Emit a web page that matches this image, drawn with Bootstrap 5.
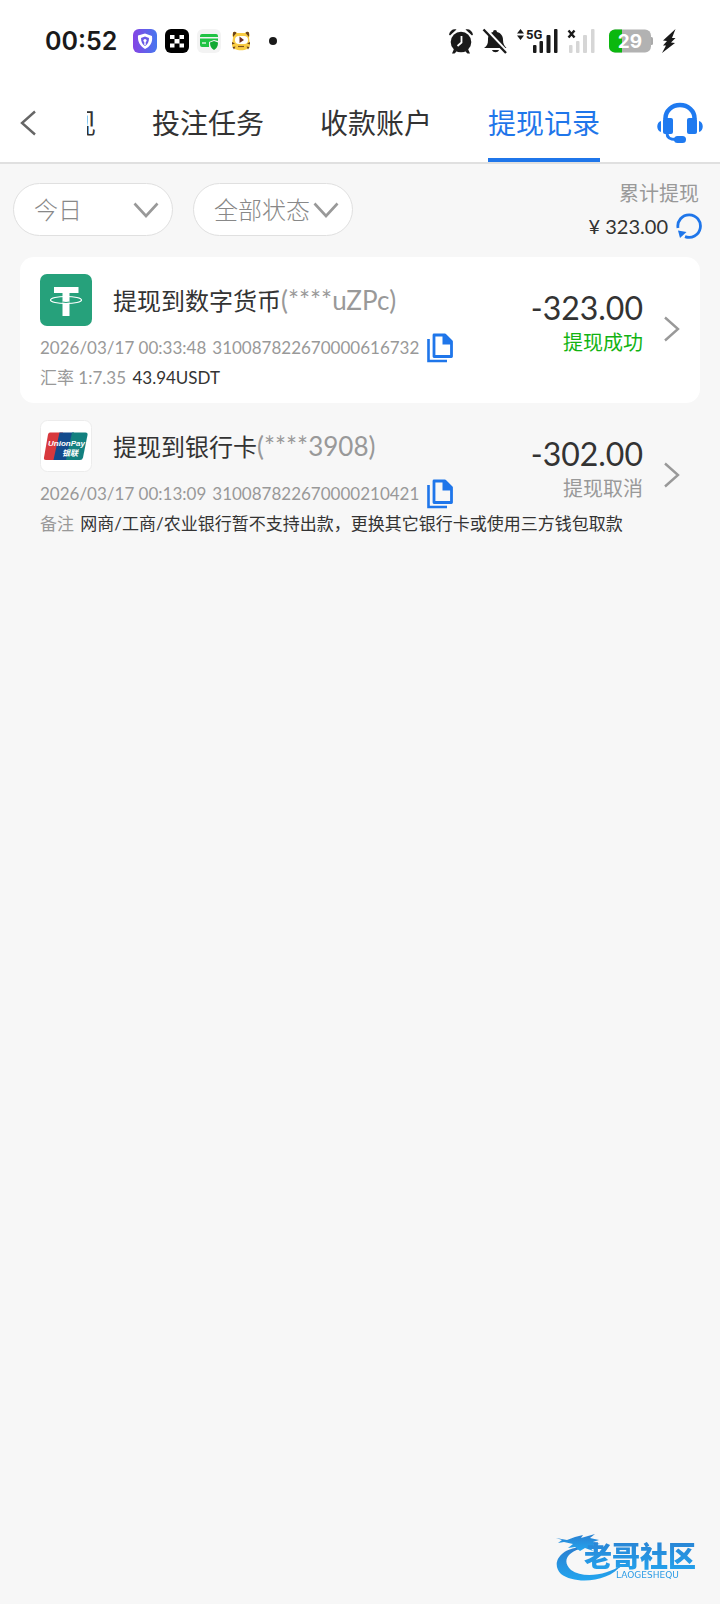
<!DOCTYPE html>
<html lang="zh-CN">
<head>
<meta charset="utf-8">
<meta name="viewport" content="width=device-width, initial-scale=1">
<title>提现记录</title>
<link href="https://cdn.jsdelivr.net/npm/bootstrap@5.3.0/dist/css/bootstrap.min.css" rel="stylesheet">
<style>
  :root { --ink: #333; --soft: #999; --brand: #1f76ea; --ok: #12b312; }
  body { background: #f7f7f7; color: var(--ink); font-family: Lato, "Noto Sans CJK SC", sans-serif; min-height: 100vh; }
  svg { display: block; flex: none; }
  .status-bar { height: 80px; padding: 2px 44px 0 45px; color: #1a1a1a; }
  .clock { font: 600 25px/30px Inter, sans-serif; width: 88px; }
  .top-nav { height: 84px; border-bottom: 2px solid #e0e0e0; padding: 0 16px 0 20px; }
  .top-nav .plain-btn { padding-top: 4px; }
  .tab-strip { height: 82px; margin: 0 28px 0 51px; min-width: 0; overflow: hidden; }
  .tab-item { flex: none; margin: 0 28px; padding-top: 8px; font-size: 28px; line-height: 70px; color: var(--ink); text-decoration: none; border-bottom: 4px solid transparent; white-space: nowrap; }
  .tab-item.active { color: var(--brand); border-color: var(--brand); }
  .plain-btn { background: none; border: 0; padding: 0; }
  .filters { padding: 19px 18px 0 13px; height: 93px; }
  .pill-select { width: 160px; height: 53px; margin-right: 20px; padding: 0 0 0 20px; border: 1px solid #e0e0e0; border-radius: 27px; font-size: 24px; font-weight: 300; line-height: 32px; color: #888;
    background-position: right 13px center; background-size: 26px 16px;
    background-image: url("data:image/svg+xml,%3Csvg xmlns='http://www.w3.org/2000/svg' viewBox='0 0 26 16'%3E%3Cpath d='M1.500 1.500L13 14L24.500 1.500' fill='none' stroke='%23999' stroke-width='2.600'/%3E%3C/svg%3E"); }
  .sum-label { font-size: 20px; line-height: 20px; color: var(--soft); padding-right: 3px; margin-bottom: 10px; }
  .sum-value { font-size: 20px; line-height: 26px; }
  .record { margin: 0 20px; padding: 17px 20px 10px; border-radius: 14px; }
  .record-title { height: 52px; font-size: 24px; white-space: nowrap; }
  .record-name { margin-left: 21px; }
  .account { font-size: 26px; }
  .soft { color: var(--soft); }
  .record-meta { height: 30px; margin-top: 7px; font-size: 17px; line-height: 30px; color: var(--soft); white-space: nowrap; }
  .serial { margin: 0 8px 0 6px; }
  .record-note { font-size: 17px; line-height: 30px; }
  .note-label { margin-right: 2px; }
  .amount { font-size: 32px; line-height: 36px; padding-top: 16px; }
  .state { font-size: 20px; line-height: 32px; }
  .state-ok { color: var(--ok); }
  .record-open { margin-left: 21px; padding-bottom: 10px; }
  .brand-mark { position: fixed; right: 16px; bottom: 20px; width: 150px; height: 54px; }
</style>
</head>
<body>
<header class="bg-white">
  <div class="status-bar d-flex align-items-center">
    <div class="clock">00:52</div>
    <div class="d-flex align-items-center gap-2 flex-grow-1">
      <svg width="24" height="24" viewBox="0 0 24 24"><defs><linearGradient id="vp"><stop stop-color="#8544e4"/><stop offset="1" stop-color="#4777ef"/></linearGradient></defs><rect width="24" height="24" rx="6" fill="url(#vp)"/><path d="M5 6.500L12 4.500L19 7C20 13 17 18 12 20C7 17 4.500 13 5 6.500Z" fill="#fff"/><path d="M8 9l4-1.500L16 9c0 4-1.500 6.500-4 8-2.500-1.500-4-4-4-8z" fill="#6a59e6"/><circle cx="12" cy="11.500" r="1.600" fill="#fff"/><path d="M11.300 12h1.400v4h-1.400z" fill="#fff"/></svg>
      <svg width="24" height="24" viewBox="0 0 24 24"><rect width="24" height="24" rx="6"/><path d="M5 6h4.500v4H5zM14.500 6H19v4h-4.500zM9.500 10h5v4.500h-5zM5 14.500h4.500v4H5zM14.500 14.500H19v4h-4.500z" fill="#fff"/></svg>
      <svg width="24" height="24" viewBox="0 0 24 24"><rect width="24" height="24" rx="6" fill="#f3f3f3"/><path d="M3 7a2 2 0 0 1 2-2h14a2 2 0 0 1 2 2v1H3zM3 9.500h18V12l-4-1-5 2v5H5a2 2 0 0 1-2-2z" fill="#20c344"/><path d="M5 14h4" stroke="#fff" stroke-width="1.200"/><path d="M13 13.500l4-1.500 4 1.500c0 4-1.500 6-4 7.500-2.500-1.500-4-3.500-4-7.500z" fill="#12a833"/></svg>
      <svg width="24" height="24" viewBox="0 0 24 24"><path d="M4 3.500Q6 2 8 4h8q2-2 4-.500Q21.500 6 20 8.500L21 16c0 7-18 7-18 0l1-7.500Q2.500 6 4 3.500z" fill="#f9cd45"/><path d="M4 3.500Q6 2 7.500 4L4 8zM20 3.500Q18 2 16.500 4L20 8zM3 13l3 1.500-3 1zM21 13l-3 1.500 3 1zM3.500 18l3-.500-1.500 3zM20.500 18l-3-.500 1.500 3z" fill="#6a421d"/><rect x="6" y="7" width="13" height="8" rx="4" fill="#fff"/><path d="M10.500 7.500l4.500 3.500-4.500 3z" fill="#6d2f22"/><path d="M9 17.500h6" stroke="#80521d" stroke-width="1.200"/></svg>
      <svg width="24" height="24" viewBox="0 0 24 24"><circle cx="12" cy="12" r="4" fill="#1a1a1a"/></svg>
    </div>
    <div class="d-flex align-items-center">
      <svg class="me-2" width="26" height="26" viewBox="0 0 26 26" fill="#1a1a1a"><circle cx="13" cy="14" r="10.300"/><path d="M1 6.500C2 2.500 5 .500 8.500 1.500L2 7.500zM25 6.500C24 2.500 21 .500 17.500 1.500L24 7.500zM6 21l-2 4.500h2.500L9 23zM20 21l2 4.500h-2.500L17 23z"/><path d="M13.500 8v6.500L9.500 18" fill="none" stroke="#fff" stroke-width="1.800"/></svg>
      <svg width="26" height="26" viewBox="0 0 26 26"><path d="M11 4a2 2 0 0 1 4 0c4 1 6 4 6 8 0 4 1.500 6 3.500 8H2c3-2 4-4 4-8 0-4 1-7 5-8zM10 22h7c-1 3-6 3-7 0z" fill="#1a1a1a"/><path d="M3.500 1L26 25" stroke="#fff" stroke-width="3"/><path d="M1.500 1.500L24 25" stroke="#1a1a1a" stroke-width="2.400"/></svg>
      <svg class="ms-2" width="43" height="26" viewBox="0 0 43 26" fill="#1a1a1a"><path d="M1 5.500l3.500-4.500L8 5.500zM1 7.500h7l-3.500 4.500z"/><text x="10" y="11" font-family="Roboto" font-weight="700" font-size="13">5G</text><rect x="17" y="17" width="3.500" height="8" rx="1"/><rect x="23.500" y="13" width="3.500" height="12" rx="1"/><rect x="30.500" y="7" width="4" height="18" rx="1"/><rect x="38" y="1" width="3.500" height="24" rx="1"/></svg>
      <svg class="ms-2" width="29" height="26" viewBox="0 0 29 26"><path d="M1.500 2.500l6 7m0-7l-6 7" stroke="#1a1a1a" stroke-width="2.400"/><g fill="#d6d6d6"><rect x="2" y="17" width="3.500" height="8" rx="1"/><rect x="9" y="13" width="3.500" height="12" rx="1"/><rect x="16" y="7" width="4" height="18" rx="1"/><rect x="24" y="1" width="3.500" height="24" rx="1"/></g></svg>
      <svg class="ms-2 me-2 ps-1 box-content" width="50" height="24" viewBox="0 0 46 24"><path d="M42 8h1.500q1.500 0 1.500 1.500v5q0 1.500-1.500 1.500H42z" fill="#aaa"/><rect x="1" y=".500" width="42" height="23" rx="6" fill="#b2b2b2"/><path d="M14 .500H7a6 6 0 0 0-6 6v11a6 6 0 0 0 6 6h7z" fill="#0bb80f"/><text x="22" y="19" text-anchor="middle" font-family="Inter" font-weight="700" font-size="19" fill="#fff">29</text></svg>
      <svg width="14" height="24" viewBox="0 0 14 24"><path d="M13.500 0L1 11.500l4 .500-4 4.500h3L0 24l13-10-4-.500 4.500-4.500H10z" fill="#1a1a1a"/></svg>
    </div>
  </div>
  <nav class="top-nav d-flex align-items-center">
    <button class="plain-btn" type="button" aria-label="返回"><svg width="16" height="26" viewBox="0 0 16 26"><path d="M15 1.500L2 13l13 11.500" fill="none" stroke="#666" stroke-width="2.400"/></svg></button>
    <div class="tab-strip d-flex justify-content-end flex-grow-1">
      <a class="tab-item" href="#">提现</a>
      <a class="tab-item" href="#">投注任务</a>
      <a class="tab-item" href="#">收款账户</a>
      <a class="tab-item active" href="#" aria-current="page">提现记录</a>
    </div>
    <button class="plain-btn" type="button" aria-label="客服"><svg width="48" height="42" viewBox="0 0 48 42" fill="#1f7af0"><path d="M9.500 17v-1a14.500 13 0 0 1 29 0v1" fill="none" stroke="#1f7af0" stroke-width="4.500"/><rect x="7" y="16" width="10" height="16" rx="2"/><rect x="31" y="16" width="10" height="16" rx="2"/><path d="M5 19v11c-5-1-5-10 0-11zM43 19v11c5-1 5-10 0-11z"/><path d="M11 31c0 5 3 6.500 9 6.500" fill="none" stroke="#1f7af0" stroke-width="3"/><rect x="18" y="34" width="12" height="7" rx="3.500"/></svg></button>
  </nav>
</header>
<main>
  <section class="filters d-flex align-items-start">
    <select class="form-select pill-select" aria-label="日期"><option>今日</option></select>
    <select class="form-select pill-select" aria-label="状态"><option>全部状态</option></select>
    <div class="ms-auto text-end">
      <div class="sum-label">累计提现</div>
      <div class="sum-value d-flex align-items-center justify-content-end gap-2"><span>¥ 323.00</span>
        <button class="plain-btn" type="button" aria-label="刷新"><svg width="26" height="26" viewBox="0 0 26 26"><path d="M2 15A11.300 11.300 0 1 1 9 23.600" fill="none" stroke="#1f76ea" stroke-width="2.800"/><path d="M2 17.500l8.500 1.500L4 25z" fill="#1f76ea"/></svg></button>
      </div>
    </div>
  </section>

  <article class="record bg-white d-flex align-items-center">
    <div class="flex-grow-1">
      <div class="d-flex justify-content-between">
        <div>
          <div class="record-title d-flex align-items-center">
            <svg width="52" height="52" viewBox="0 0 52 52"><rect width="52" height="52" rx="7" fill="#26a17b"/><path d="M14 13h24.500v6H29.500v23h-7V19H14z" fill="#fff"/><ellipse cx="26" cy="26" rx="15.500" ry="3.500" fill="none" stroke="#fff" stroke-width="1.200"/><path d="M22.500 28q3.500 1 7 0" stroke="#26a17b" fill="none"/></svg>
            <span class="record-name">提现到数字货币<span class="soft account">(****uZPc)</span></span>
          </div>
          <div class="record-meta d-flex align-items-center"><span>2026/03/17 00:33:48</span><span class="serial">310087822670000616732</span>
            <button class="plain-btn" type="button" aria-label="复制"><svg width="26" height="30" viewBox="0 0 26 30"><path d="M1.500 6v22H20" fill="none" stroke="#1f76ea" stroke-width="2.600"/><path d="M7 2h11l6.500 6.500V23.500H7z" fill="none" stroke="#1f76ea" stroke-width="2.800" stroke-linejoin="round"/><path d="M15.500 1.500H18L25 9v2.500h-9.500z" fill="#1f76ea"/></svg></button>
          </div>
        </div>
        <div class="text-end"><div class="amount">-323.00</div><div class="state state-ok">提现成功</div></div>
      </div>
      <div class="record-note"><span class="soft note-label">汇率 1:7.35</span> 43.94USDT</div>
    </div>
    <a class="record-open" href="#" aria-label="详情"><svg width="16" height="26" viewBox="0 0 16 26"><path d="M1 1.500L14 13L1 24.500" fill="none" stroke="#999" stroke-width="2.400"/></svg></a>
  </article>

  <article class="record d-flex align-items-center">
    <div class="flex-grow-1">
      <div class="d-flex justify-content-between">
        <div>
          <div class="record-title d-flex align-items-center">
            <svg width="52" height="52" viewBox="0 0 52 52"><rect x=".500" y=".500" width="51" height="51" rx="7" fill="#fff" stroke="#ececec"/><path d="M10 12.500h13L17 40H6q-2.500 0-2-2.500L8 14.500q.500-2 2-2z" fill="#d8383d"/><path d="M19.500 12.500H34L28 40H13.500z" fill="#124a8c"/><path d="M32 12.500h13.500q2.500 0 2 2.500L43 37.500q-.500 2.500-3 2.500H26z" fill="#12807f"/><text x="8" y="26" font-family="Liberation Sans" font-size="8" font-weight="700" font-style="italic" fill="#fff">UnionPay</text><text x="22" y="35.500" font-family="Noto Sans CJK SC" font-size="8" font-weight="700" font-style="italic" fill="#fff">银联</text></svg>
            <span class="record-name">提现到银行卡<span class="soft account">(****3908)</span></span>
          </div>
          <div class="record-meta d-flex align-items-center"><span>2026/03/17 00:13:09</span><span class="serial">310087822670000210421</span>
            <button class="plain-btn" type="button" aria-label="复制"><svg width="26" height="30" viewBox="0 0 26 30"><path d="M1.500 6v22H20" fill="none" stroke="#1f76ea" stroke-width="2.600"/><path d="M7 2h11l6.500 6.500V23.500H7z" fill="none" stroke="#1f76ea" stroke-width="2.800" stroke-linejoin="round"/><path d="M15.500 1.500H18L25 9v2.500h-9.500z" fill="#1f76ea"/></svg></button>
          </div>
        </div>
        <div class="text-end"><div class="amount">-302.00</div><div class="state soft">提现取消</div></div>
      </div>
      <div class="record-note"><span class="soft note-label">备注</span> 网商/工商/农业银行暂不支持出款，更换其它银行卡或使用三方钱包取款</div>
    </div>
    <a class="record-open" href="#" aria-label="详情"><svg width="16" height="26" viewBox="0 0 16 26"><path d="M1 1.500L14 13L1 24.500" fill="none" stroke="#999" stroke-width="2.400"/></svg></a>
  </article>
</main>
<svg class="brand-mark" viewBox="0 0 150 54"><defs><linearGradient id="sea" x2="0" y2="1"><stop stop-color="#2b7fd0"/><stop offset="1" stop-color="#22a5ef"/></linearGradient></defs>
  <path d="M30 18C10 15-5 32 7 44C21 55 56 52 67 35C54 45 29 49 17 40C7 31 14 21 30 18z" fill="url(#sea)"/>
  <path d="M2 8l11 2 8-3 8-2-2 3 14-4-5 4 9 2-6 2 7 2-7 1 6 3-9-1 3 4-8-3-5 3-5-4-7 1 5-4-9-2-6 1 4-3z" fill="url(#sea)"/>
  <text x="30" y="37" font-family="Noto Sans CJK SC" font-weight="900" font-size="28" fill="url(#sea)">老哥社区</text>
  <text x="62" y="48" font-family="DejaVu Sans" font-size="9" fill="#2b9be6">LAOGESHEQU</text></svg>
<script src="https://cdn.jsdelivr.net/npm/bootstrap@5.3.0/dist/js/bootstrap.bundle.min.js"></script>
</body>
</html>
